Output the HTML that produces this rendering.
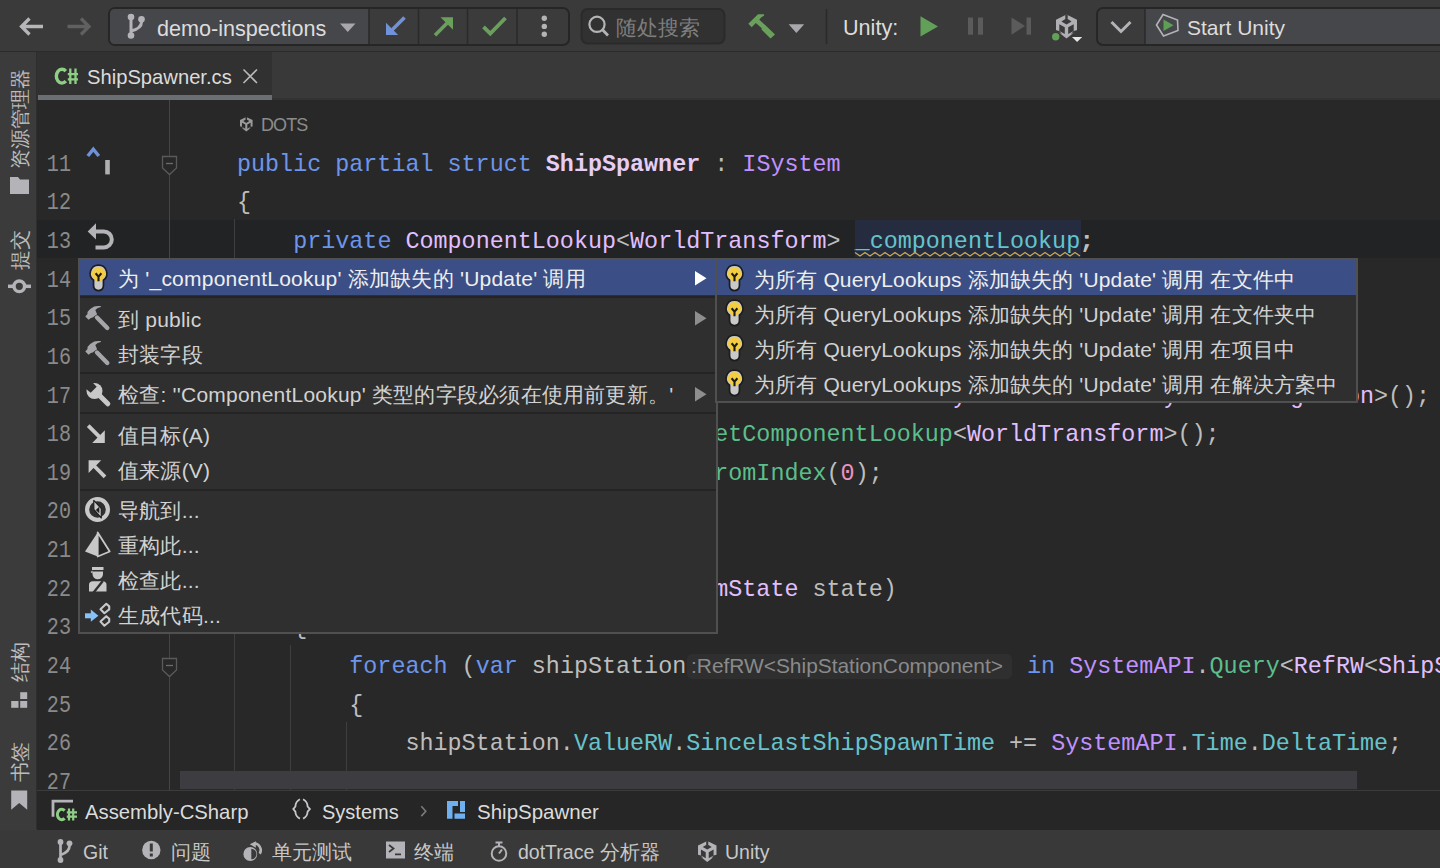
<!DOCTYPE html><html><head><meta charset="utf-8"><style>
*{box-sizing:border-box}
html,body{margin:0;padding:0}
body{width:1440px;height:868px;overflow:hidden;position:relative;background:#3b3b3b;font-family:"Liberation Sans",sans-serif;color:#dfe1e5}
.a{position:absolute}
.code{position:absolute;font-family:"Liberation Mono",monospace;font-size:23.40px;white-space:pre;height:38.625px;line-height:38.625px;color:#bdbdbd}
.ln{position:absolute;font-family:"Liberation Mono",monospace;font-size:23.40px;white-space:pre;line-height:38.625px;color:#8a8a8a;text-align:right;width:40px;left:31px;transform:scaleX(0.86);transform-origin:right center}
.mi{position:absolute;left:118px;font-size:21px;white-space:pre;color:#d2d2d2;line-height:24px;letter-spacing:0.22px}
.sm{position:absolute;left:754px;font-size:21px;white-space:pre;color:#d2d2d2;line-height:24px;letter-spacing:0.14px}
svg{position:absolute;overflow:visible}
</style></head><body>
<div class="a" style="left:0;top:0;width:1440px;height:52px;background:#3a3a3a;border-bottom:1.5px solid #2b2b2b"></div>
<div class="a" style="left:0;top:52px;width:37px;height:777px;background:#3b3b3b;border-right:1px solid #2e2e2e"></div>
<div class="a" style="left:37px;top:52px;width:1403px;height:48px;background:#393939;border-bottom:2px solid #333333;border-left:1px solid #3e3e3e"></div>
<div class="a" style="left:37px;top:52px;width:235px;height:48px;background:#313131"></div>
<div class="a" style="left:38px;top:95px;width:234px;height:5px;background:#6b6e73"></div>
<div class="a" style="left:37px;top:100px;width:1403px;height:690px;background:#282828"></div>
<div class="a" style="left:37px;top:790px;width:1403px;height:40px;background:#262626;border-top:1px solid #3c3c3c"></div>
<div class="a" style="left:0;top:830px;width:1440px;height:38px;background:#393939"></div>
<div class="a" style="left:37px;top:219.5px;width:1403px;height:38.6px;background:#212325"></div>
<div class="ln" style="top:145.80px">11</div>
<div class="ln" style="top:184.43px">12</div>
<div class="ln" style="top:223.05px">13</div>
<div class="ln" style="top:261.68px">14</div>
<div class="ln" style="top:300.30px">15</div>
<div class="ln" style="top:338.93px">16</div>
<div class="ln" style="top:377.55px">17</div>
<div class="ln" style="top:416.18px">18</div>
<div class="ln" style="top:454.80px">19</div>
<div class="ln" style="top:493.43px">20</div>
<div class="ln" style="top:532.05px">21</div>
<div class="ln" style="top:570.67px">22</div>
<div class="ln" style="top:609.30px">23</div>
<div class="ln" style="top:647.92px">24</div>
<div class="ln" style="top:686.55px">25</div>
<div class="ln" style="top:725.17px">26</div>
<div class="ln" style="top:763.80px">27</div>
<div class="code" style="left:237.0px;top:145.80px"><span style="color:#6c95eb">public partial struct </span><span style="color:#e6cdf5;font-weight:bold">ShipSpawner</span> : <span style="color:#c191ff">ISystem</span></div>
<div class="code" style="left:237.0px;top:184.43px">{</div>
<div class="code" style="left:237.0px;top:223.05px">    <span style="color:#6c95eb">private </span><span style="color:#e1bfff">ComponentLookup</span>&lt;<span style="color:#e1bfff">WorldTransform</span>&gt; <span style="color:#66c3cc">_componentLookup</span>;</div>
<div class="code" style="left:237.0px;top:377.55px">        <span style="color:#e1bfff">tkBUeaUusoUUDlslCaemcxbvUCMDSkBhckVruMxNWCEysAbvmzhrvwieUUyEeNlbwMNgccC</span><span style="color:#e1bfff">on</span>&gt;();</div>
<div class="code" style="left:237.0px;top:416.18px">        _componentLookup = state.G<span style="color:#5bbf8c">etComponentLookup</span>&lt;<span style="color:#e1bfff">WorldTransform</span>&gt;();</div>
<div class="code" style="left:237.0px;top:454.80px">        ___random = Random.CreateF<span style="color:#5bbf8c">romIndex</span>(<span style="color:#ed94c0">0</span>);</div>
<div class="code" style="left:237.0px;top:570.67px">    public void OnUpdate(ref Syste<span style="color:#e1bfff">mState</span> state)</div>
<div class="code" style="left:237.0px;top:609.30px">    {</div>
<div class="code" style="left:237.0px;top:647.92px">        <span style="color:#6c95eb">foreach</span> (<span style="color:#6c95eb">var</span> shipStation</div>
<div class="code" style="left:237.0px;top:686.55px">        {</div>
<div class="code" style="left:237.0px;top:725.17px">            shipStation.<span style="color:#66c3cc">ValueRW</span>.<span style="color:#66c3cc">SinceLastShipSpawnTime</span> += <span style="color:#c191ff">SystemAPI</span>.<span style="color:#66c3cc">Time</span>.<span style="color:#66c3cc">DeltaTime</span>;</div>
<div class="a" style="left:687px;top:654px;width:325px;height:25px;background:#2f2f2f;border-radius:5px"></div>
<div class="a" style="left:691px;top:652.8px;font-size:20.9px;line-height:25px;color:#8a8a8a;white-space:pre">:RefRW&lt;ShipStationComponent&gt;</div>
<div class="code" style="left:1013px;top:647.92px"> <span style="color:#6c95eb">in</span> <span style="color:#c191ff">SystemAPI</span>.<span style="color:#5bbf8c">Query</span>&lt;<span style="color:#e1bfff">RefRW</span>&lt;<span style="color:#e1bfff">ShipStationComponent</span></div>
<div class="a" style="left:855px;top:220px;width:226px;height:37px;background:#252c3f"></div>
<div class="code" style="left:855.6px;top:223.05px"><span style="color:#66c3cc">_componentLookup</span>;</div>
<svg style="left:0;top:0" width="1440" height="868"><path d="M855 252.5 L855.0 252.5 L860.0 256.0 L865.0 252.5 L870.0 256.0 L875.0 252.5 L880.0 256.0 L885.0 252.5 L890.0 256.0 L895.0 252.5 L900.0 256.0 L905.0 252.5 L910.0 256.0 L915.0 252.5 L920.0 256.0 L925.0 252.5 L930.0 256.0 L935.0 252.5 L940.0 256.0 L945.0 252.5 L950.0 256.0 L955.0 252.5 L960.0 256.0 L965.0 252.5 L970.0 256.0 L975.0 252.5 L980.0 256.0 L985.0 252.5 L990.0 256.0 L995.0 252.5 L1000.0 256.0 L1005.0 252.5 L1010.0 256.0 L1015.0 252.5 L1020.0 256.0 L1025.0 252.5 L1030.0 256.0 L1035.0 252.5 L1040.0 256.0 L1045.0 252.5 L1050.0 256.0 L1055.0 252.5 L1060.0 256.0 L1065.0 252.5 L1070.0 256.0 L1075.0 252.5 L1080.0 256.0 " fill="none" stroke="#c9a74f" stroke-width="1.3"/></svg>
<div class="a" style="left:169px;top:100px;width:1px;height:690px;background:#454545"></div>
<div class="a" style="left:234px;top:219px;width:1px;height:571px;background:#3e3e3e"></div>
<div class="a" style="left:290px;top:645px;width:1px;height:145px;background:#3e3e3e"></div>
<div class="a" style="left:346px;top:722px;width:1px;height:68px;background:#3e3e3e"></div>
<svg style="left:161px;top:155px" width="18" height="22"><path d="M1.5 1.5 H15.5 V13 L8.5 19.5 L1.5 13 Z" fill="#282828" stroke="#5a5a5a" stroke-width="1.3"/><path d="M5 8.5 H12" stroke="#6a6a6a" stroke-width="1.3"/></svg>
<svg style="left:161px;top:657px" width="18" height="22"><path d="M1.5 1.5 H15.5 V13 L8.5 19.5 L1.5 13 Z" fill="#282828" stroke="#5a5a5a" stroke-width="1.3"/><path d="M5 8.5 H12" stroke="#6a6a6a" stroke-width="1.3"/></svg>
<div class="a" style="left:180px;top:771px;width:1177px;height:18px;background:#3d3d41"></div>
<svg style="left:239.5px;top:117.0px" width="12.6" height="14.4" viewBox="0 0 21 24"><path d="M10.5 0 L21 5.2 V15.7 L10.5 24 L0 15.7 V5.2 Z" fill="#9a9a9a"/><path d="M9.3 0 H11.7 V4.3 H9.3 Z M10.5 3.6 L15.6 6.8 L10.5 9.8 L5.4 6.8 Z M3.3 9.6 L8.8 12.7 V19.5 L3.3 16.4 Z M17.7 9.6 L12.2 12.7 V19.5 L17.7 16.4 Z M0 15.7 L3.3 16.4 L6 19.5 L0 17 Z M21 15.7 L17.7 16.4 L15 19.5 L21 17 Z" fill="#282828"/></svg>
<div class="a" style="left:261px;top:114.5px;font-size:18px;line-height:20px;color:#8c8c8c;letter-spacing:-0.9px">DOTS</div>
<svg style="left:0;top:0" width="1440" height="52"><path d="M21.5 26.5 H43 M29.5 18.5 L21.5 26.5 L29.5 34.5" fill="none" stroke="#b6b6ba" stroke-width="3.3"/><path d="M67.5 26.5 H89 M81 18.5 L89 26.5 L81 34.5" fill="none" stroke="#606060" stroke-width="3.3"/><rect x="109" y="8" width="460" height="37" rx="6" fill="#3b3b3b" stroke="#262626" stroke-width="2"/><path d="M115 9 H369 V44 H115 Q110 44 110 39 V14 Q110 9 115 9 Z" fill="#46474b"/><path d="M369 9 V44 M418.5 9 V44 M467.5 9 V44 M517 9 V44" stroke="#2a2a2a" stroke-width="1.5"/><path d="M131 17 V35.5 M141.5 19.5 V22 Q141.5 28.5 131 31" fill="none" stroke="#b4b4b8" stroke-width="3"/><circle cx="131" cy="17" r="3.3" fill="#b4b4b8"/><circle cx="141.5" cy="19.3" r="3.3" fill="#b4b4b8"/><circle cx="131" cy="35.5" r="3.3" fill="#b4b4b8"/><path d="M340 23.5 H355.5 L347.75 32 Z" fill="#a8a8ac"/><path d="M404.5 17.5 L391 31" stroke="#7092d8" stroke-width="3.6"/><path d="M386 22.8 V35 H398.2 Z" fill="#7092d8"/><path d="M435 35.3 L448 22.3" stroke="#6aa05c" stroke-width="3.6"/><path d="M440.5 17.3 H453 V29.8 Z" fill="#6aa05c"/><path d="M483.5 26.8 L490.3 33.6 L505.5 18" fill="none" stroke="#6aa05c" stroke-width="3.8"/><circle cx="544.3" cy="18.3" r="2.7" fill="#b4b4b4"/><circle cx="544.3" cy="26.4" r="2.7" fill="#b4b4b4"/><circle cx="544.3" cy="34.3" r="2.7" fill="#b4b4b4"/><rect x="581.5" y="9" width="143" height="34.5" rx="6" fill="#313131" stroke="#2a2a2a" stroke-width="2"/><circle cx="597" cy="24.3" r="7.6" fill="none" stroke="#b4b4b8" stroke-width="2.2"/><path d="M602.5 29.8 L608 35.5" stroke="#b4b4b8" stroke-width="2.8"/><path d="M748.3 23.8 L758 14.3 H764 V15.8 Q761 17 759.3 19.8 L766.5 26.2 L775 34.5 L770.5 38.6 L761.5 29.5 L761.8 28.2 L755.8 23 L751.7 27.2 Z" fill="#6aa05c"/><path d="M788.6 24.3 H804.2 L796.4 33 Z" fill="#a8a8ac"/><path d="M826.5 9 V44" stroke="#2a2a2a" stroke-width="1.5"/><path d="M920.5 16.3 L938 26.4 L920.5 36.5 Z" fill="#62a05a"/><rect x="968" y="17.5" width="5" height="17.2" fill="#5b5b5b"/><rect x="978" y="17.5" width="5" height="17.2" fill="#5b5b5b"/><path d="M1011.5 17.5 L1025 26 L1011.5 34.7 Z" fill="#5b5b5b"/><rect x="1026.5" y="17.5" width="4.5" height="17.2" fill="#5b5b5b"/><g transform="translate(1056,14.6)"><path d="M10.5 0 L21 5.2 V15.7 L10.5 24 L0 15.7 V5.2 Z" fill="#b0b0b4"/><path d="M9.3 0 H11.7 V4.3 H9.3 Z M10.5 3.6 L15.6 6.8 L10.5 9.8 L5.4 6.8 Z M3.3 9.6 L8.8 12.7 V19.5 L3.3 16.4 Z M17.7 9.6 L12.2 12.7 V19.5 L17.7 16.4 Z M0 15.7 L3.3 16.4 L6 19.5 L0 17 Z M21 15.7 L17.7 16.4 L15 19.5 L21 17 Z" fill="#3a3a3a"/></g><circle cx="1055.7" cy="36.7" r="4.4" fill="#3a3a3a"/><circle cx="1055.7" cy="36.7" r="3.7" fill="#62a05a"/><path d="M1071 36 H1083.5 L1077.2 43 Z" fill="#3a3a3a"/><path d="M1072 36.9 H1082.2 L1077.1 42 Z" fill="#e6e6e6"/><rect x="1097" y="8" width="360" height="37" rx="6" fill="#3b3b3b" stroke="#262626" stroke-width="2"/><rect x="1145" y="9" width="300" height="35" fill="#46474b"/><path d="M1145 9 V44" stroke="#2a2a2a" stroke-width="1.5"/><path d="M1111.5 22 L1121 31.5 L1130.5 22" fill="none" stroke="#b4b4b8" stroke-width="3"/><path d="M1163 14.5 L1177.5 20 L1178 30.5 L1163.5 36 L1156.5 25 Z" fill="none" stroke="#b4b4b8" stroke-width="1.6"/><path d="M1163.5 19.5 L1173.5 25.3 L1163.5 31 Z" fill="#5f9e55"/></svg>
<div class="a" style="left:157px;top:14.5px;font-size:21.6px;line-height:28px;color:#dcdcdc;white-space:pre">demo-inspections</div>
<div class="a" style="left:616px;top:14px;font-size:20.5px;line-height:28px;color:#7e7e7e;white-space:pre">随处搜索</div>
<div class="a" style="left:843px;top:13.5px;font-size:21.6px;line-height:28px;color:#dcdcdc;white-space:pre">Unity:</div>
<div class="a" style="left:1187px;top:14.3px;font-size:21px;line-height:28px;color:#dcdcdc;white-space:pre">Start Unity</div>
<div class="a" style="left:9.5px;top:168.5px;font-size:19.6px;line-height:20px;color:#bcbcbc;white-space:pre;transform-origin:0 0;transform:rotate(-90deg)">资源管理器</div>
<div class="a" style="left:9.5px;top:269.5px;font-size:19.6px;line-height:20px;color:#bcbcbc;white-space:pre;transform-origin:0 0;transform:rotate(-90deg)">提交</div>
<div class="a" style="left:9.5px;top:682.0px;font-size:19.6px;line-height:20px;color:#bcbcbc;white-space:pre;transform-origin:0 0;transform:rotate(-90deg)">结构</div>
<div class="a" style="left:9.5px;top:782.0px;font-size:19.6px;line-height:20px;color:#bcbcbc;white-space:pre;transform-origin:0 0;transform:rotate(-90deg)">书签</div>
<svg style="left:0;top:0" width="37" height="830"><path d="M10 177 H18 L20 179.5 H29 V194 H10 Z" fill="#b4b4b8"/><path d="M8 286.3 H31" stroke="#b4b4b8" stroke-width="3.5"/><circle cx="19.3" cy="286.3" r="5.3" fill="#3b3b3b" stroke="#b4b4b8" stroke-width="3.4"/><rect x="20.2" y="692.2" width="7" height="6.8" fill="#b4b4b8"/><rect x="11.2" y="701" width="7.3" height="6.8" fill="#b4b4b8"/><rect x="20.2" y="701" width="7" height="6.8" fill="#b4b4b8"/><path d="M11.2 790.6 H27.2 V809.8 L19.2 803 L11.2 809.8 Z" fill="#b4b4b8"/></svg>
<svg style="left:0;top:0" width="100" height="100"><path d="M65.8 71.2 A5.6 6.9 0 1 0 65.8 81.2" fill="none" stroke="#8fcf85" stroke-width="3.4"/><path d="M70.3 68.5 V84 M75.5 68.5 V84 M67.8 74.1 H78 M67.8 79.4 H78" stroke="#8fcf85" stroke-width="2.3"/></svg>
<div class="a" style="left:87px;top:64px;font-size:20.2px;line-height:26px;color:#dcdcdc;white-space:pre">ShipSpawner.cs</div>
<svg style="left:0;top:0" width="300" height="100"><path d="M243.5 69.5 L257 83 M257 69.5 L243.5 83" stroke="#b8b8b8" stroke-width="1.6"/></svg>
<svg style="left:0;top:790px" width="700" height="40"><path d="M53 26.7 V11.2 H73" fill="none" stroke="#b4b4b8" stroke-width="2.8"/><path d="M299.9 9.3 Q295.6 11.5 295.4 16.5 L293.3 19.1 L295.4 21.7 Q295.6 26.5 299.9 28.6" fill="none" stroke="#c8c8cc" stroke-width="1.8"/><path d="M303.1 9.3 Q307.4 11.5 307.6 16.5 L309.9 19.1 L307.6 21.7 Q307.4 26.5 303.1 28.6" fill="none" stroke="#c8c8cc" stroke-width="1.8"/><path d="M421.3 16.3 L425.8 21.2 L421.3 26.1" fill="none" stroke="#7a7a7a" stroke-width="1.6"/><path d="M447 11 H458 V16 H452.5 V28.7 H447 Z M460 11 H465 V22 H460 Z M454.5 23.5 H465 V28.7 H454.5 Z" fill="#6fb0f0"/></svg>
<svg style="left:0;top:0" width="100" height="868"><path d="M64.6 810.6 A4.3 5.2 0 1 0 64.6 818.4" fill="none" stroke="#8fcf85" stroke-width="3.1"/><path d="M69 808.6 V820.4 M73.2 808.6 V820.4 M66.8 812.4 H77 M66.8 816.6 H77" stroke="#8fcf85" stroke-width="2.2"/></svg>
<div class="a" style="left:85px;top:799px;font-size:20.3px;line-height:26px;color:#dcdcdc;white-space:pre">Assembly-CSharp</div>
<div class="a" style="left:322px;top:799px;font-size:20px;line-height:26px;color:#dcdcdc;white-space:pre">Systems</div>
<div class="a" style="left:477px;top:799px;font-size:20.5px;line-height:26px;color:#dcdcdc;white-space:pre">ShipSpawner</div>
<svg style="left:0;top:830px" width="800" height="38"><path d="M60.5 12 V30 M69.5 13 V16 Q69.5 22 60.5 25" fill="none" stroke="#b4b4b8" stroke-width="2.7"/><circle cx="60.5" cy="12" r="2.9" fill="#b4b4b8"/><circle cx="69.5" cy="13.3" r="2.9" fill="#b4b4b8"/><circle cx="60.5" cy="30" r="2.9" fill="#b4b4b8"/><circle cx="151.3" cy="20" r="9.2" fill="#b4b4b8"/><rect x="149.8" y="13.5" width="3" height="8" fill="#393939"/><rect x="149.8" y="23.5" width="3" height="3" fill="#393939"/><circle cx="250.3" cy="24" r="6.9" fill="#b4b4b8"/><path d="M251.3 18.8 A5.2 5.2 0 0 1 251.3 29.2 Z" fill="#393939"/><path d="M253.5 13.6 A6.6 6.6 0 0 1 259.7 23.8" fill="none" stroke="#393939" stroke-width="4.6"/><path d="M254.5 13.6 A6.6 6.6 0 0 1 259.7 23.8" fill="none" stroke="#b4b4b8" stroke-width="2.5"/><path d="M249.8 14.2 L255.8 11.2 L255.8 17.8 Z" fill="#b4b4b8"/><rect x="386" y="11.5" width="19" height="17" fill="#b4b4b8"/><path d="M389 15 L393.5 18.5 L389 22 M395 24.3 H401" fill="none" stroke="#393939" stroke-width="1.8"/><circle cx="499" cy="23.5" r="7.3" fill="none" stroke="#b4b4b8" stroke-width="2"/><path d="M495.5 12.5 H502.5 M499 16 V12.5 M499 23.5 L502 19.5" stroke="#b4b4b8" stroke-width="2"/></svg>
<svg style="left:697.5px;top:841.0px" width="18.5" height="21.1" viewBox="0 0 21 24"><path d="M10.5 0 L21 5.2 V15.7 L10.5 24 L0 15.7 V5.2 Z" fill="#b4b4b8"/><path d="M9.3 0 H11.7 V4.3 H9.3 Z M10.5 3.6 L15.6 6.8 L10.5 9.8 L5.4 6.8 Z M3.3 9.6 L8.8 12.7 V19.5 L3.3 16.4 Z M17.7 9.6 L12.2 12.7 V19.5 L17.7 16.4 Z M0 15.7 L3.3 16.4 L6 19.5 L0 17 Z M21 15.7 L17.7 16.4 L15 19.5 L21 17 Z" fill="#393939"/></svg>
<div class="a" style="left:83px;top:839px;font-size:19.5px;line-height:26px;color:#c8c8c8;white-space:pre">Git</div>
<div class="a" style="left:171px;top:839px;font-size:19.5px;line-height:26px;color:#c8c8c8;white-space:pre">问题</div>
<div class="a" style="left:271.5px;top:839px;font-size:19.5px;line-height:26px;color:#c8c8c8;white-space:pre">单元测试</div>
<div class="a" style="left:414px;top:839px;font-size:19.5px;line-height:26px;color:#c8c8c8;white-space:pre">终端</div>
<div class="a" style="left:518px;top:839px;font-size:19.5px;line-height:26px;color:#c8c8c8;white-space:pre">dotTrace 分析器</div>
<div class="a" style="left:725px;top:839px;font-size:19.5px;line-height:26px;color:#c8c8c8;white-space:pre">Unity</div>
<div class="a" style="left:78px;top:258px;width:640px;height:376px;background:#2f2f2f;border:2px solid #505050"></div>
<div class="a" style="left:80px;top:260px;width:636px;height:35px;background:#3b4e85"></div>
<div class="a" style="left:80px;top:295.5px;width:636px;height:2px;background:#242424"></div>
<div class="a" style="left:80px;top:372px;width:636px;height:2px;background:#242424"></div>
<div class="a" style="left:80px;top:411.5px;width:636px;height:2px;background:#242424"></div>
<div class="a" style="left:80px;top:488.5px;width:636px;height:2px;background:#242424"></div>
<div class="a" style="left:715px;top:258px;width:643px;height:145px;background:#2f2f2f;border:2px solid #505050"></div>
<div class="a" style="left:717px;top:260px;width:639px;height:35px;background:#3b4e85"></div>
<svg style="left:88.9px;top:263.5px" width="20" height="28" viewBox="0 0 20 28"><path d="M9.5 0.3 A9.2 9.2 0 0 1 15.3 16.6 V21.8 A5.8 5.8 0 0 1 3.7 21.8 V16.6 A9.2 9.2 0 0 1 9.5 0.3 Z" fill="#1c1c1c"/><path d="M9.5 2 A7.5 7.5 0 0 1 13.6 15.8 V21.6 A4.1 4.1 0 0 1 5.4 21.6 V15.8 A7.5 7.5 0 0 1 9.5 2 Z" fill="#c9c9c9"/><circle cx="9.5" cy="9.6" r="6.6" fill="#f5cd40"/><path d="M6 14 H13 V17 H6 Z" fill="#f5cd40"/><path d="M6.6 9.3 L9.5 12.6 L12.4 9.3 M9.5 12.3 V17.2" fill="none" stroke="#1c1c1c" stroke-width="2.1"/></svg>
<svg style="left:725.3px;top:263.5px" width="20" height="28" viewBox="0 0 20 28"><path d="M9.5 0.3 A9.2 9.2 0 0 1 15.3 16.6 V21.8 A5.8 5.8 0 0 1 3.7 21.8 V16.6 A9.2 9.2 0 0 1 9.5 0.3 Z" fill="#1c1c1c"/><path d="M9.5 2 A7.5 7.5 0 0 1 13.6 15.8 V21.6 A4.1 4.1 0 0 1 5.4 21.6 V15.8 A7.5 7.5 0 0 1 9.5 2 Z" fill="#c9c9c9"/><circle cx="9.5" cy="9.6" r="6.6" fill="#f5cd40"/><path d="M6 14 H13 V17 H6 Z" fill="#f5cd40"/><path d="M6.6 9.3 L9.5 12.6 L12.4 9.3 M9.5 12.3 V17.2" fill="none" stroke="#1c1c1c" stroke-width="2.1"/></svg>
<svg style="left:725.3px;top:298.7px" width="20" height="28" viewBox="0 0 20 28"><path d="M9.5 0.3 A9.2 9.2 0 0 1 15.3 16.6 V21.8 A5.8 5.8 0 0 1 3.7 21.8 V16.6 A9.2 9.2 0 0 1 9.5 0.3 Z" fill="#1c1c1c"/><path d="M9.5 2 A7.5 7.5 0 0 1 13.6 15.8 V21.6 A4.1 4.1 0 0 1 5.4 21.6 V15.8 A7.5 7.5 0 0 1 9.5 2 Z" fill="#c9c9c9"/><circle cx="9.5" cy="9.6" r="6.6" fill="#f5cd40"/><path d="M6 14 H13 V17 H6 Z" fill="#f5cd40"/><path d="M6.6 9.3 L9.5 12.6 L12.4 9.3 M9.5 12.3 V17.2" fill="none" stroke="#1c1c1c" stroke-width="2.1"/></svg>
<svg style="left:725.3px;top:333.9px" width="20" height="28" viewBox="0 0 20 28"><path d="M9.5 0.3 A9.2 9.2 0 0 1 15.3 16.6 V21.8 A5.8 5.8 0 0 1 3.7 21.8 V16.6 A9.2 9.2 0 0 1 9.5 0.3 Z" fill="#1c1c1c"/><path d="M9.5 2 A7.5 7.5 0 0 1 13.6 15.8 V21.6 A4.1 4.1 0 0 1 5.4 21.6 V15.8 A7.5 7.5 0 0 1 9.5 2 Z" fill="#c9c9c9"/><circle cx="9.5" cy="9.6" r="6.6" fill="#f5cd40"/><path d="M6 14 H13 V17 H6 Z" fill="#f5cd40"/><path d="M6.6 9.3 L9.5 12.6 L12.4 9.3 M9.5 12.3 V17.2" fill="none" stroke="#1c1c1c" stroke-width="2.1"/></svg>
<svg style="left:725.3px;top:369.1px" width="20" height="28" viewBox="0 0 20 28"><path d="M9.5 0.3 A9.2 9.2 0 0 1 15.3 16.6 V21.8 A5.8 5.8 0 0 1 3.7 21.8 V16.6 A9.2 9.2 0 0 1 9.5 0.3 Z" fill="#1c1c1c"/><path d="M9.5 2 A7.5 7.5 0 0 1 13.6 15.8 V21.6 A4.1 4.1 0 0 1 5.4 21.6 V15.8 A7.5 7.5 0 0 1 9.5 2 Z" fill="#c9c9c9"/><circle cx="9.5" cy="9.6" r="6.6" fill="#f5cd40"/><path d="M6 14 H13 V17 H6 Z" fill="#f5cd40"/><path d="M6.6 9.3 L9.5 12.6 L12.4 9.3 M9.5 12.3 V17.2" fill="none" stroke="#1c1c1c" stroke-width="2.1"/></svg>
<svg style="left:695.0px;top:270.5px" width="12" height="16"><path d="M0 0 L11.5 7.3 L0 14.6 Z" fill="#ffffff"/></svg>
<svg style="left:695.0px;top:311.0px" width="12" height="16"><path d="M0 0 L11.5 7.3 L0 14.6 Z" fill="#8e8e8e"/></svg>
<svg style="left:695.0px;top:387.0px" width="12" height="16"><path d="M0 0 L11.5 7.3 L0 14.6 Z" fill="#8e8e8e"/></svg>
<svg style="left:0;top:0" width="720" height="640"><g transform="translate(85,305.5)"><path d="M0.3 11 L3.6 14.3 L5.9 12.5 L7.7 12.1 L12.1 8.8 L10.3 4.4 Q12.5 2.2 15.8 1.6 V0.6 Q12 0 9.2 1.1 Q6 2.5 2.5 6.5 V8.5 Z" fill="#a6a6aa"/><path d="M12 12 L22.3 22.5" stroke="#a6a6aa" stroke-width="4.4" stroke-linecap="round"/></g><g transform="translate(85,340.5)"><path d="M0.3 11 L3.6 14.3 L5.9 12.5 L7.7 12.1 L12.1 8.8 L10.3 4.4 Q12.5 2.2 15.8 1.6 V0.6 Q12 0 9.2 1.1 Q6 2.5 2.5 6.5 V8.5 Z" fill="#a6a6aa"/><path d="M12 12 L22.3 22.5" stroke="#a6a6aa" stroke-width="4.4" stroke-linecap="round"/></g><g transform="translate(86.5,382.5)"><path d="M10 10 L21.3 21.3" stroke="#c8c8c8" stroke-width="5" stroke-linecap="round"/><circle cx="8" cy="8.5" r="8" fill="#c8c8c8"/><path d="M-1.5 5.5 L5 -1 L10.2 4.2 L4.2 10.2 Z" fill="#2f2f2f"/></g><path d="M88.2 425.6 L99.5 436.9" stroke="#c8c8c8" stroke-width="3.8"/><path d="M104.8 430.3 V442.9 H92.2 L96.6 438.5 Q99.5 435.8 100.4 434.7 Z" fill="#c8c8c8"/><path d="M105 476.8 L93.7 465.5" stroke="#c8c8c8" stroke-width="3.8"/><path d="M88.6 472.9 V460.3 H101.2 L96.8 464.7 Q94 467.5 93 468.5 Z" fill="#c8c8c8"/><circle cx="97.5" cy="509.5" r="10.4" fill="none" stroke="#c8c8c8" stroke-width="4.2"/><path d="M93.8 500.3 L101.3 508.5 L101.3 518 L93.8 509.5 Z" fill="#c8c8c8" stroke="#222" stroke-width="1.2" stroke-linejoin="round"/><path d="M95.8 510 L99.3 506.8 L99.3 513.2 Z" fill="#1e1e1e"/><path d="M97.7 532.5 L85 551.5 L97.7 556.5 Z" fill="#c8c8c8"/><path d="M97.7 532.5 L109.7 551.5 L97.7 556.5 Z" fill="#262626" stroke="#c8c8c8" stroke-width="1.8" stroke-linejoin="round"/><rect x="92" y="567" width="11.5" height="3" fill="#c8c8c8"/><path d="M92.5 571.5 H103 V574 A5.2 5.2 0 0 1 92.5 574 Z" fill="#c8c8c8"/><path d="M89 591.5 V585 Q89 581.3 93 581.3 H102.5 Q106.5 581.3 106.5 585 V591.5 Z" fill="#c8c8c8"/><path d="M93.6 592.5 L102.8 581" stroke="#2f2f2f" stroke-width="2.3"/><path d="M90.5 572 L92.5 570.5 V573.5 Z" fill="#c8c8c8"/><path d="M85 615.8 H92" stroke="#86c1f8" stroke-width="5"/><path d="M90.8 609.6 L98.4 615.7 L90.8 621.8 Z" fill="#86c1f8"/><g fill="none" stroke="#c8c8c8" stroke-width="2.1" stroke-linejoin="round"><path d="M100.5 609.2 L106.3 603.8 L109.2 606.4 V609.4 L104.4 613.2 Z"/><path d="M100.5 621.6 L106.3 616.2 L109.2 618.8 V621.8 L104.4 625.7 Z"/></g></svg>
<div class="mi" style="top:266.5px;color:#eeeeee">为 &#x27;_componentLookup&#x27; 添加缺失的 &#x27;Update&#x27; 调用</div>
<div class="mi" style="top:307.5px;">到 public</div>
<div class="mi" style="top:342.5px;">封装字段</div>
<div class="mi" style="top:382.5px;">检查: &#x27;&#x27;ComponentLookup&#x27; 类型的字段必须在使用前更新。&#x27;</div>
<div class="mi" style="top:423.5px;">值目标(A)</div>
<div class="mi" style="top:458.5px;">值来源(V)</div>
<div class="mi" style="top:498.5px;">导航到...</div>
<div class="mi" style="top:533.5px;">重构此...</div>
<div class="mi" style="top:568.5px;">检查此...</div>
<div class="mi" style="top:603.5px;">生成代码...</div>
<div class="sm" style="top:267.7px;color:#eeeeee">为所有 QueryLookups 添加缺失的 &#x27;Update&#x27; 调用 在文件中</div>
<div class="sm" style="top:302.9px;">为所有 QueryLookups 添加缺失的 &#x27;Update&#x27; 调用 在文件夹中</div>
<div class="sm" style="top:338.1px;">为所有 QueryLookups 添加缺失的 &#x27;Update&#x27; 调用 在项目中</div>
<div class="sm" style="top:373.3px;">为所有 QueryLookups 添加缺失的 &#x27;Update&#x27; 调用 在解决方案中</div>
<svg style="left:0;top:0" width="200" height="300"><path d="M87.8 156 L93.3 149.2 L98.8 156" fill="none" stroke="#6d92d8" stroke-width="3.4"/><rect x="105.2" y="160" width="4.6" height="14.4" fill="#b0b0b0"/><path d="M87.7 231.4 L96 223.3 V239.4 Z" fill="#b4b4b8"/><path d="M95 231.4 H103.8 A8 8 0 0 1 103.8 247.4 H95.5" fill="none" stroke="#b4b4b8" stroke-width="4"/></svg>
</body></html>
